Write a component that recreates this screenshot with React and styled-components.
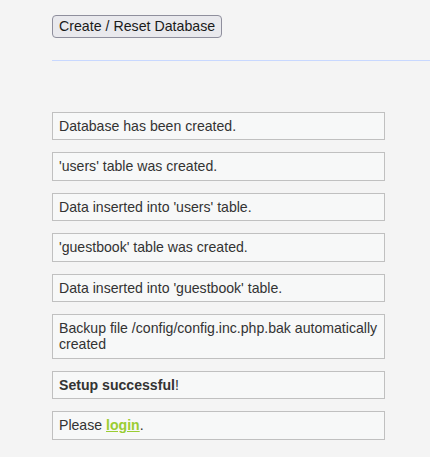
import React from "react";
import styled, { createGlobalStyle } from "styled-components";

const Global = createGlobalStyle`
  html, body { margin: 0; padding: 0; background: #f4f4f4; }
  body { font-family: "Liberation Sans", Arial, sans-serif; font-size: 14px; color: #333; }
`;

const Page = styled.div`
  padding: 15px 0 18px 52px;
`;

const ResetButton = styled.button`
  font-family: "Liberation Sans", Arial, sans-serif;
  font-size: 14.2px;
  color: #1a1a1a;
  background: #e9e9ed;
  border: 1px solid #8f8f9d;
  border-radius: 4px;
  padding: 2px 6px;
  line-height: 17px;
  margin: 0;
`;

const Divider = styled.div`
  height: 1px;
  background: #c8d8ff;
  margin-top: 22px;
`;

const Messages = styled.div`
  display: flex;
  flex-direction: column;
  gap: 12px;
  margin-top: 51px;
  width: 333px;
`;

const Message = styled.div`
  box-sizing: border-box;
  background: #f7f8f8;
  border: 1px solid #c0c0c0;
  padding: 5px 6px;
  font-size: 14.1px;
  line-height: 16.4px;
`;

const Link = styled.a`
  color: #9acd32;
  font-weight: bold;
  text-decoration: underline;
`;

export default function App() {
  return (
    <Page>
      <Global />
      <ResetButton>Create / Reset Database</ResetButton>
      <Divider />
      <Messages>
        <Message>Database has been created.</Message>
        <Message>'users' table was created.</Message>
        <Message>Data inserted into 'users' table.</Message>
        <Message>'guestbook' table was created.</Message>
        <Message>Data inserted into 'guestbook' table.</Message>
        <Message>Backup file /config/config.inc.php.bak automatically created</Message>
        <Message><b>Setup successful</b>!</Message>
        <Message>Please <Link href="#">login</Link>.</Message>
      </Messages>
    </Page>
  );
}
